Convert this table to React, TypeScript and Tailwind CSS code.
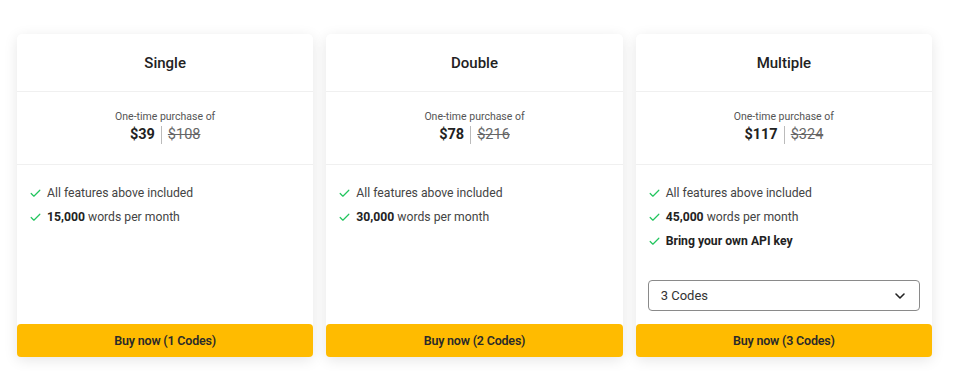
import { Check, ChevronDown } from "lucide-react";

type Plan = {
  name: string;
  price: number;
  oldPrice: number;
  words: string;
  codes: number;
  byok?: boolean;
  picker?: boolean;
};

const plans: Plan[] = [
  { name: "Single", price: 39, oldPrice: 108, words: "15,000", codes: 1 },
  { name: "Double", price: 78, oldPrice: 216, words: "30,000", codes: 2 },
  { name: "Multiple", price: 117, oldPrice: 324, words: "45,000", codes: 3, byok: true, picker: true },
];

function Feature({ children }: { children: React.ReactNode }) {
  return (
    <li className="flex h-6 items-center gap-[5px] text-[12.2px] text-[#444]">
      <Check className="h-[13px] w-[13px] shrink-0 text-[#22c55e]" strokeWidth={2.2} />
      <span>{children}</span>
    </li>
  );
}

function PlanCard({ plan }: { plan: Plan }) {
  return (
    <div className="flex h-[323px] flex-col rounded-[5px] bg-white shadow-[0_3px_14px_rgba(0,0,0,0.1)]">
      {/* Title */}
      <div className="flex h-[58px] shrink-0 items-center justify-center border-b border-[#f0f0f0] pt-[2px]">
        <h2 className="text-[15px] font-medium text-[#222]">{plan.name}</h2>
      </div>

      {/* Price */}
      <div className="flex h-[73px] shrink-0 flex-col items-center border-b border-[#f0f0f0] pt-[17px]">
        <p className="text-[10.5px] leading-4 text-[#555]">One-time purchase of</p>
        <div className="flex h-5 items-center text-[14.5px]">
          <span className="font-bold text-[#222]">${plan.price}</span>
          <span className="mx-[6px] h-[18px] w-px bg-[#bbb]" />
          <span className="text-[#666] line-through">${plan.oldPrice}</span>
        </div>
      </div>

      {/* Features */}
      <div className="flex min-h-0 flex-1 flex-col px-3 pt-4">
        <ul>
          <Feature>All features above included</Feature>
          <Feature>
            <b className="font-bold text-[#222]">{plan.words}</b> words per month
          </Feature>
          {plan.byok && (
            <Feature>
              <b className="font-bold text-[#222]">Bring your own API key</b>
            </Feature>
          )}
        </ul>
        {plan.picker && (
          <button
            type="button"
            className="mt-auto mb-[13px] flex h-[31px] w-full items-center justify-between rounded-[4px] border border-[#8a8a8a] pl-3 pr-[11px] text-[13px] text-[#333]"
          >
            <span>{plan.codes} Codes</span>
            <ChevronDown className="h-4 w-4 text-[#222]" strokeWidth={2.4} />
          </button>
        )}
      </div>

      <button
        type="button"
        className="h-[33px] w-full shrink-0 rounded-[4px] bg-[#ffbb00] pt-[2px] text-[12.5px] font-semibold tracking-[-0.2px] text-[#2a2a2a]"
      >
        Buy now ({plan.codes} Codes)
      </button>
    </div>
  );
}

export default function App() {
  return (
    <div className="min-h-[371px] bg-white pt-[34px] pl-[17px] pr-[28px] font-['Roboto',sans-serif]">
      <div className="grid grid-cols-3 gap-[13px]">
        {plans.map((plan) => (
          <PlanCard key={plan.name} plan={plan} />
        ))}
      </div>
    </div>
  );
}
